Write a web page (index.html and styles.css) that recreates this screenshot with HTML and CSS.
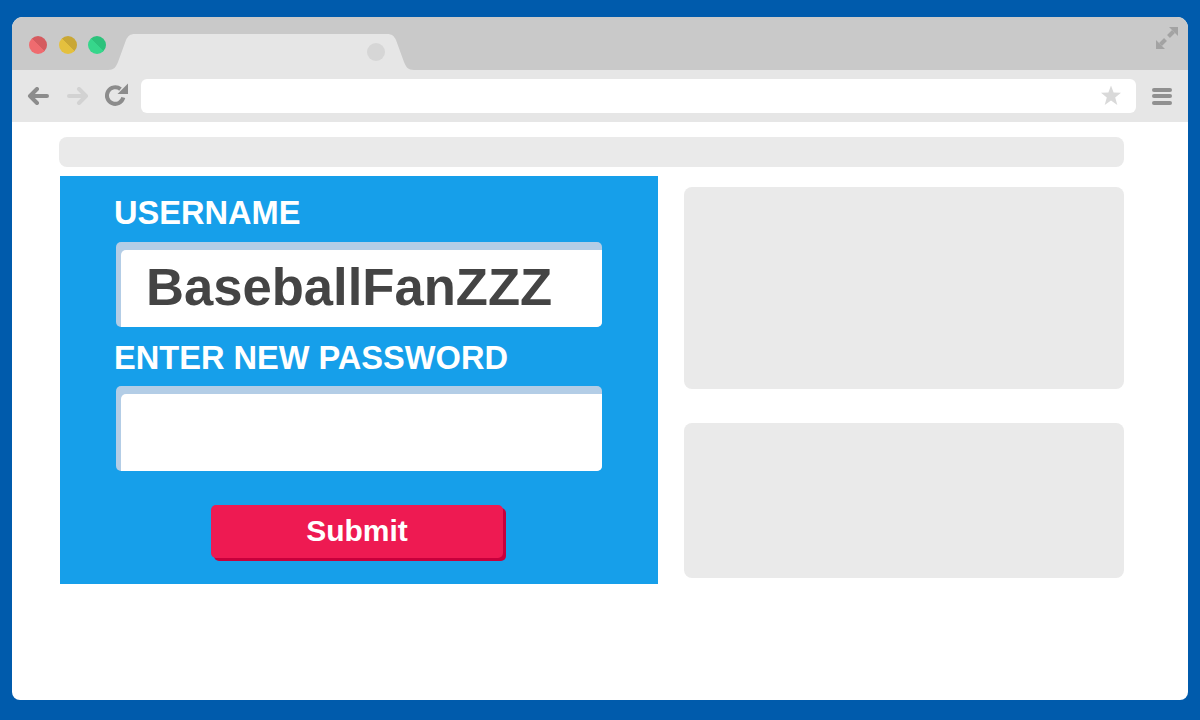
FILE: index.html
```html
<!DOCTYPE html>
<html lang="en">
<head>
<meta charset="utf-8">
<title>Reset password</title>
<link rel="stylesheet" href="styles.css">
</head>
<body>
<div class="window">
  <div class="tabbar">
    <div class="lights">
      <span class="light red"></span>
      <span class="light yellow"></span>
      <span class="light green"></span>
    </div>
    <svg class="tab" width="306" height="36" viewBox="0 0 306 36">
      <path d="M0 36 C6 36 8 33 10 28 L18 6 C20 2 22 0 27 0 L279 0 C284 0 286 2 288 6 L296 28 C298 33 300 36 306 36 Z" fill="#e6e6e6"/>
      <circle cx="268" cy="18" r="9" fill="#d6d6d6"/>
    </svg>
    <svg class="expand" width="22" height="22" viewBox="0 0 22 22">
      <polygon points="22,0 22,9 13,0" fill="#a3a3a3"/>
      <line x1="17.5" y1="4.5" x2="12.5" y2="9.5" stroke="#a3a3a3" stroke-width="4"/>
      <polygon points="0,22 0,13 9,22" fill="#a3a3a3"/>
      <line x1="4.5" y1="17.5" x2="9.5" y2="12.5" stroke="#a3a3a3" stroke-width="4"/>
    </svg>
  </div>
  <div class="toolbar">
    <svg class="nav back" width="22" height="18" viewBox="0 0 22 18">
      <path d="M20 9 H3 M10 2 L3 9 L10 16" fill="none" stroke="#8c8c8c" stroke-width="4" stroke-linecap="round" stroke-linejoin="round"/>
    </svg>
    <svg class="nav fwd" width="22" height="18" viewBox="0 0 22 18">
      <path d="M2 9 H19 M12 2 L19 9 L12 16" fill="none" stroke="#d2d2d2" stroke-width="4" stroke-linecap="round" stroke-linejoin="round"/>
    </svg>
    <svg class="nav reload" width="25" height="24" viewBox="0 0 25 24">
      <path d="M20.3 14.6 A8.3 8.3 0 1 1 17.5 6.1" fill="none" stroke="#8c8c8c" stroke-width="4"/>
      <polygon points="25,0.5 25,11 14.5,11" fill="#8c8c8c"/>
    </svg>
    <div class="address">
      <svg class="star" width="22" height="22" viewBox="0 0 22 22">
        <polygon points="11,0.5 13.6,7.6 21,7.8 15.2,12.5 17.3,20 11,15.6 4.7,20 6.8,12.5 1,7.8 8.4,7.6" fill="#d9d9d9"/>
      </svg>
    </div>
    <div class="menu">
      <span></span><span></span><span></span>
    </div>
  </div>
  <div class="content">
    <div class="topbar"></div>
    <div class="main">
      <div class="panel">
        <div class="label">USERNAME</div>
        <div class="field"><div class="field-inner">BaseballFanZZZ</div></div>
        <div class="label second">ENTER NEW PASSWORD</div>
        <div class="field pw"><div class="field-inner"></div></div>
        <div class="submit">Submit</div>
      </div>
      <div class="side">
        <div class="box tall"></div>
        <div class="box short"></div>
      </div>
    </div>
  </div>
</div>
</body>
</html>
```

FILE: styles.css
```css
html, body {
  margin: 0;
  padding: 0;
}
body {
  background: #005bac;
  height: 720px;
  overflow: hidden;
  font-family: "Liberation Sans", Arial, sans-serif;
}
.window {
  margin: 17px 12px 0;
  height: 683px;
  background: #ffffff;
  border-radius: 11px 11px 8px 8px;
  overflow: hidden;
}
.tabbar {
  height: 53px;
  background: #c9c9c9;
  display: flex;
  align-items: flex-end;
  padding-left: 17px;
}
.lights {
  align-self: flex-start;
  margin-top: 19px;
  display: flex;
  gap: 11.5px;
}
.light {
  width: 18px;
  height: 18px;
  border-radius: 50%;
  display: block;
}
.red { background: linear-gradient(45deg, #ef6b6f 50%, #d55b5f 50%); }
.yellow { background: linear-gradient(45deg, #e4c03e 50%, #c9a735 50%); }
.green { background: linear-gradient(45deg, #36d68b 50%, #2cc27b 50%); }
.tab {
  display: block;
  margin-left: 2px;
}
.expand {
  display: block;
  align-self: flex-start;
  margin-left: auto;
  margin-top: 10px;
  margin-right: 10px;
}
.toolbar {
  height: 52px;
  background: #e6e6e6;
  display: flex;
  align-items: center;
  padding-left: 15px;
}
.nav { display: block; }
.fwd { margin-left: 18px; }
.reload { margin-left: 14px; margin-top: -2px; }
.address {
  margin-left: 13px;
  width: 995px;
  height: 34px;
  background: #ffffff;
  border-radius: 6px;
  display: flex;
  align-items: center;
  justify-content: flex-end;
  padding-right: 14px;
  box-sizing: border-box;
}
.star { display: block; }
.menu {
  margin-left: 16px;
  width: 20px;
  display: flex;
  flex-direction: column;
  gap: 2.5px;
}
.menu span {
  display: block;
  height: 4px;
  border-radius: 2px;
  background: #909090;
}
.content {
  padding: 15px 64px 0 47px;
}
.topbar {
  height: 30px;
  background: #eaeaea;
  border-radius: 8px;
}
.main {
  display: flex;
  margin-top: 9px;
  margin-left: 1px;
  gap: 26px;
}
.panel {
  width: 598px;
  box-sizing: border-box;
  background: #169fea;
  padding: 19px 0 26px 54px;
}
.label {
  color: #ffffff;
  font-weight: bold;
  font-size: 32.6px;
  line-height: 36px;
  white-space: nowrap;
}
.label.second { margin-top: 13px; }
.field {
  margin-top: 11px;
  margin-left: 2px;
  width: 486px;
  height: 85px;
  box-sizing: border-box;
  padding: 8px 0 0 5px;
  background: #b3cde6;
  border-radius: 5px;
  overflow: hidden;
}
.field.pw { margin-top: 10px; }
.field-inner {
  height: 77px;
  background: #ffffff;
  border-top-left-radius: 5px;
  padding-left: 25px;
  font-weight: bold;
  font-size: 52.6px;
  line-height: 74px;
  color: #444444;
  white-space: nowrap;
}
.submit {
  margin-top: 34px;
  margin-left: 97px;
  width: 292px;
  height: 53px;
  background: #ee1a52;
  border-radius: 5px;
  box-shadow: 3px 3px 0 #c8003c;
  color: #ffffff;
  font-weight: bold;
  font-size: 30px;
  line-height: 51px;
  text-align: center;
}
.side {
  width: 440px;
  padding-top: 11px;
  display: flex;
  flex-direction: column;
  gap: 34px;
}
.box {
  background: #eaeaea;
  border-radius: 8px;
}
.box.tall { height: 202px; }
.box.short { height: 155px; }
```
